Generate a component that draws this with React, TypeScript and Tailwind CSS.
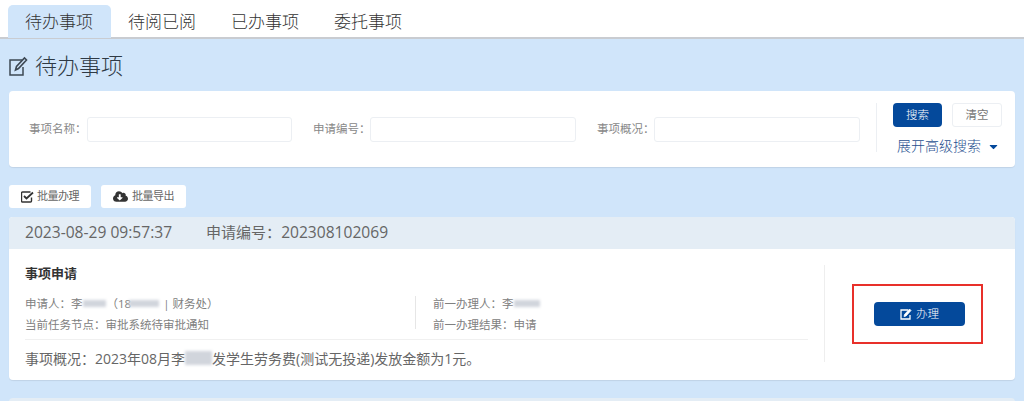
import { FaCaretDown, FaCloudDownloadAlt } from 'react-icons/fa'

const FONT = 'font-["Open_Sans","Noto_Sans_CJK_SC",sans-serif]'

const tabs = ['待办事项', '待阅已阅', '已办事项', '委托事项']

const Redacted = ({ className }: { className: string }) => (
  <span className={`inline-block h-[7px] bg-gray-300 blur-[1.5px] ${className}`} />
)

const SearchField = ({ label, labelWidth, width }: { label: string; labelWidth: string; width: string }) => (
  <div className="flex items-center">
    <span className={`shrink-0 whitespace-nowrap text-[11.5px] leading-none text-[#888] ${labelWidth}`}>
      {label}&#xFF1A;
    </span>
    <div className={`h-[25px] rounded-[3px] border border-[#eceff3] bg-white ${width}`} />
  </div>
)

const App = () => (
  <div className={`h-[401px] w-[1024px] overflow-hidden bg-[#d0e5fa] ${FONT}`}>
    <nav className="flex h-[39px] border-b-2 border-[#c9ccd1] bg-white pl-[7.5px] pt-[5px]">
      {tabs.map((tab, index) => (
        <div
          key={tab}
          className={`flex h-[33px] w-[103px] items-center justify-center rounded-t-[5px] text-[17px] font-light text-[#333] ${
            index === 0 ? 'bg-[#d0e5fa]' : ''
          }`}
        >
          {tab}
        </div>
      ))}
    </nav>

    <h1 className="flex h-[52px] items-center gap-[6px] pl-[9px] text-[22px] font-light leading-none text-[#2f3a45]">
      <svg width="20" height="21" viewBox="0 0 20 21" fill="none" stroke="#3d4853" strokeWidth="1.5">
        <path d="M13 5H1v15h13v-8" />
        <path d="M6.5 15l1-3.5 8-8.5 2 2-8 8.5z" strokeWidth="1.6" />
      </svg>
      待办事项
    </h1>

    <section className="mx-[9px] flex h-[76px] items-center rounded-[4px] bg-white shadow-[0_1px_1px_rgba(0,0,0,0.08)]">
      <div className="flex gap-[21px] pl-5">
        <SearchField label="事项名称" labelWidth="w-[58px]" width="w-[205px]" />
        <SearchField label="申请编号" labelWidth="w-[57px]" width="w-[206px]" />
        <SearchField label="事项概况" labelWidth="w-[57px]" width="w-[206px]" />
      </div>
      <div className="ml-4 mt-3 flex h-[49px] flex-col self-start border-l border-[#eceff3] pl-4">
        <div className="flex gap-[10px]">
          <button className="h-6 w-[49px] rounded-[4px] bg-[#04499b] text-[11.5px] font-light text-white">搜索</button>
          <button className="h-6 w-[50px] rounded-[3px] border border-[#eceff3] bg-white text-[11.5px] text-[#777]">
            清空
          </button>
        </div>
        <div className="mt-[9px] flex items-center pl-[4px] text-[14px] font-light leading-[20px] text-[#1f4f8f]">
          展开高级搜索
          <FaCaretDown className="ml-[6px] size-[13px] text-[#04499b]" />
        </div>
      </div>
    </section>

    <div className="ml-[9px] mt-[18px] flex gap-[10px]">
      <button className="flex h-[23px] w-[82px] items-center justify-center gap-[3px] rounded-[3px] bg-white text-[11px] tracking-[-0.5px] text-[#666]">
        <svg width="13" height="12" viewBox="0 0 13 12" fill="none" stroke="#333" strokeWidth="1.4">
          <path d="M10.5 6.5V10a1 1 0 0 1-1 1h-8a1 1 0 0 1-1-1V2a1 1 0 0 1 1-1h8" />
          <path d="M3 5l2.5 2.5L12 1.5" strokeWidth="1.8" />
        </svg>
        批量办理
      </button>
      <button className="flex h-[23px] w-[85px] items-center justify-center gap-[4px] rounded-[3px] bg-white text-[11px] tracking-[-0.5px] text-[#666]">
        <FaCloudDownloadAlt className="size-[15px] text-[#333]" />
        批量导出
      </button>
    </div>

    <article className="mx-[9px] mt-[9px] h-[163px] overflow-hidden rounded-[4px] bg-white shadow-[0_1px_1px_rgba(0,0,0,0.08)]">
      <header className="flex h-8 items-center gap-[34px] bg-[#e4edf5] pl-4 text-[15.6px] text-[#666]">
        <span>2023-08-29 09:57:37</span>
        <span>
          <span className="text-[15px]">申请编号&#xFF1A;</span>202308102069
        </span>
      </header>
      <div className="flex pl-4 pt-4">
        <div className="mr-4 w-[783px]">
          <h2 className="text-[13px] font-bold leading-[16px] text-[#333]">事项申请</h2>
          <div className="mt-[15px] flex h-[33px]">
            <div className="w-[391px] border-r border-[#e6e6e6] text-[11.5px] leading-[21px] text-[#808080]">
              <div className="-mt-[3px] flex items-center">
                申请人&#xFF1A;李
                <Redacted className="w-[23px]" />
                <span className="ml-[1px]">&#xFF08;18</span>
                <Redacted className="-ml-[2px] w-[30px]" />
                <span className="ml-[4px]">| 财务处&#xFF09;</span>
              </div>
              <div>当前任务节点&#xFF1A;审批系统待审批通知</div>
            </div>
            <div className="pl-[17px] text-[11.5px] leading-[21px] text-[#808080]">
              <div className="-mt-[3px] flex items-center">
                前一办理人&#xFF1A;李
                <Redacted className="w-[26px]" />
              </div>
              <div>前一办理结果&#xFF1A;申请</div>
            </div>
          </div>
          <div className="mt-[10px] flex h-[37px] items-center border-t border-[#f0f0f0] text-[14px] text-[#666]">
            事项概况&#xFF1A;2023年08月李
            <Redacted className="h-[14px] w-[27px]" />
            发学生劳务费(测试无投递)发放金额为1元。
          </div>
        </div>
        <div className="flex h-[97px] flex-1 items-center border-l border-[#eee] pl-[27px]">
          <div className="mt-[1px] flex h-[60px] w-[131px] items-center border-2 border-[#e8302a] pl-5">
            <button className="flex h-6 w-[91px] items-center justify-center gap-[4px] rounded-[4px] bg-[#04499b] text-[11.5px] font-light text-white">
              <svg width="12" height="12" viewBox="0 0 12 12" fill="none" stroke="#fff" strokeWidth="1.3">
                <path d="M8 2H1v9h9V7" />
                <path d="M4 8.5l.5-2L9.5 1 11 2.5 6 8z" fill="#fff" strokeWidth="0.8" />
              </svg>
              办理
            </button>
          </div>
        </div>
      </div>
    </article>

    <div className="mx-[9px] mt-[18px] h-4 rounded-t-[4px] bg-[#e4edf5]" />
  </div>
)

export default App
